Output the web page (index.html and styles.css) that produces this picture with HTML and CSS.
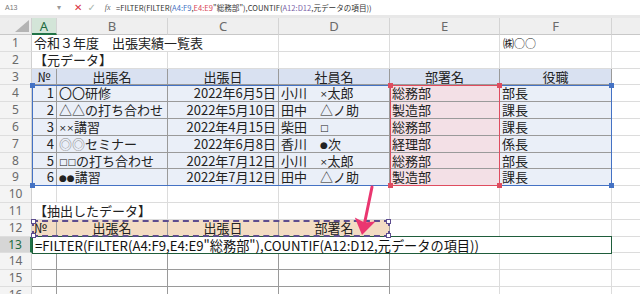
FILE: index.html
```html
<!DOCTYPE html>
<html lang="ja">

<head>
    <meta charset="UTF-8">
    <meta name="viewport" content="width=device-width, initial-scale=1.0">
    <title>出張実績一覧表</title>
    <link rel="stylesheet" href="styles.css">
</head>

<body>
    <div class="formula-bar">
        <div class="name-box"><span>A13</span><span class="caret">▾</span></div>
        <div class="bar-buttons">
            <span class="btn-cancel">✕</span>
            <span class="btn-enter">✓</span>
            <span class="btn-fx">fx</span>
        </div>
        <div class="formula">=FILTER(FILTER(<span class="ref-blue">A4:F9</span>,<span class="ref-red">E4:E9</span>"総務部"),COUNTIF(<span class="ref-purple">A12:D12</span>,元データの項目))</div>
    </div>

    <div class="sheet-wrap">
        <div class="grid sheet">
            <div class="corner"></div>
            <div class="ch sel">A</div><div class="ch">B</div><div class="ch">C</div><div class="ch">D</div><div class="ch">E</div><div class="ch">F</div><div class="ch"></div>

            <div class="rh">1</div><div class="c span3">令和３年度　出張実績一覧表</div><div class="c"></div><div class="c"></div><div class="c corp">㈱○○</div><div class="c"></div>
            <div class="rh">2</div><div class="c span2">【元データ】</div><div class="c"></div><div class="c"></div><div class="c"></div><div class="c"></div><div class="c"></div>
            <div class="rh">3</div><div class="c t th ctr">№</div><div class="c t th ctr">出張名</div><div class="c t th ctr">出張日</div><div class="c t th ctr">社員名</div><div class="c t th ctr">部署名</div><div class="c t th ctr">役職</div><div class="c"></div>

            <div class="rh">4</div><div class="c t d r">1</div><div class="c t d">〇〇研修</div><div class="c t d r">2022年6月5日</div><div class="c t d">小川　<span class="sym">×</span>太郎</div><div class="c t dept">総務部</div><div class="c t d">部長</div><div class="c"></div>
            <div class="rh">5</div><div class="c t d r">2</div><div class="c t d">△△の打ち合わせ</div><div class="c t d r">2022年5月10日</div><div class="c t d">田中　△ノ助</div><div class="c t dept">製造部</div><div class="c t d">課長</div><div class="c"></div>
            <div class="rh">6</div><div class="c t d r">3</div><div class="c t d"><span class="sym">××</span>講習</div><div class="c t d r">2022年4月15日</div><div class="c t d">柴田　<span class="sym">□</span></div><div class="c t dept">総務部</div><div class="c t d">課長</div><div class="c"></div>
            <div class="rh">7</div><div class="c t d r">4</div><div class="c t d"><span class="gray">◎◎</span>セミナー</div><div class="c t d r">2022年6月8日</div><div class="c t d">香川　<span class="sym">●</span>次</div><div class="c t dept">経理部</div><div class="c t d">係長</div><div class="c"></div>
            <div class="rh">8</div><div class="c t d r">5</div><div class="c t d"><span class="sym">□□</span>の打ち合わせ</div><div class="c t d r">2022年7月12日</div><div class="c t d">小川　<span class="sym">×</span>太郎</div><div class="c t dept">総務部</div><div class="c t d">部長</div><div class="c"></div>
            <div class="rh">9</div><div class="c t d r">6</div><div class="c t d"><span class="sym">●●</span>講習</div><div class="c t d r">2022年7月12日</div><div class="c t d">田中　△ノ助</div><div class="c t dept">製造部</div><div class="c t d">課長</div><div class="c"></div>

            <div class="rh">10</div><div class="c"></div><div class="c"></div><div class="c"></div><div class="c"></div><div class="c"></div><div class="c"></div><div class="c"></div>
            <div class="rh">11</div><div class="c span2">【抽出したデータ】</div><div class="c"></div><div class="c"></div><div class="c"></div><div class="c"></div><div class="c"></div>
            <div class="rh">12</div><div class="c t hx">№</div><div class="c t hx ctr">出張名</div><div class="c t hx ctr">出張日</div><div class="c t hx ctr">部署名</div><div class="c"></div><div class="c"></div><div class="c"></div>
            <div class="rh sel">13</div><div class="c t"></div><div class="c t"></div><div class="c t"></div><div class="c t"></div><div class="c"></div><div class="c"></div><div class="c"></div>
            <div class="rh">14</div><div class="c t"></div><div class="c t"></div><div class="c t"></div><div class="c t"></div><div class="c"></div><div class="c"></div><div class="c"></div>
            <div class="rh">15</div><div class="c t"></div><div class="c t"></div><div class="c t"></div><div class="c t"></div><div class="c"></div><div class="c"></div><div class="c"></div>
            <div class="rh">16</div><div class="c t"></div><div class="c t"></div><div class="c t"></div><div class="c t"></div><div class="c"></div><div class="c"></div><div class="c"></div>
        </div>

        <!-- reference highlights and the in-cell editor, on the same grid -->
        <div class="grid overlay">
            <div class="ref range-blue"><i class="hd tl"></i><i class="hd tr"></i><i class="hd bl"></i><i class="hd br"></i></div>
            <div class="ref range-red"><i class="hd tl"></i><i class="hd tr"></i><i class="hd bl"></i><i class="hd br"></i></div>
            <div class="ref range-purple"><i class="hd tl"></i><i class="hd tr"></i><i class="hd bl"></i><i class="hd br"></i></div>
            <div class="editor">=FILTER(FILTER(A4:F9,E4:E9"総務部"),COUNTIF(A12:D12,元データの項目))</div>
        </div>

        <svg class="arrow" width="30" height="55" viewBox="0 0 30 55">
            <line x1="22" y1="2" x2="14.6" y2="38" stroke="#ea3670" stroke-width="3" stroke-linecap="round" />
            <polygon points="12,50 4.8,32.5 14.5,37.5 25.4,36.5" fill="#ea3670" />
        </svg>
    </div>
</body>

</html>
```

FILE: styles.css
```css
* {
    box-sizing: border-box;
}

html,
body {
    margin: 0;
}

body {
    width: 640px;
    height: 294px;
    overflow: hidden;
    background: #fff;
    font-family: "Noto Sans CJK JP", sans-serif;
    color: #222;
}

/* formula bar */
.formula-bar {
    display: flex;
    align-items: center;
    height: 18px;
    border-bottom: 3px solid #e8e8e8;
    white-space: nowrap;
}

.name-box {
    width: 64px;
    display: flex;
    justify-content: space-between;
    align-items: center;
    padding: 0 3px 0 5px;
    font: 7px "Liberation Sans", sans-serif;
    color: #777;
}

.name-box .caret {
    font-size: 8px;
    color: #999;
}

.bar-buttons {
    width: 52px;
    display: flex;
    align-items: center;
    gap: 5px;
    padding-left: 10px;
    font: 10px "DejaVu Sans", sans-serif;
}

.btn-cancel {
    color: #d9343f;
}

.btn-enter {
    color: #a8b4ac;
}

.btn-fx {
    margin-left: 4px;
    font: italic 8px "Liberation Serif", serif;
    color: #666;
}

.formula {
    font-size: 7.6px;
    color: #333;
}

.ref-blue {
    color: #4472c4;
}

.ref-red {
    color: #d9475a;
}

.ref-purple {
    color: #7a5fa8;
}

/* sheet */
.sheet-wrap {
    position: relative;
}

.grid {
    display: grid;
    grid-template-columns: 32px 25px 111px 111px 111px 110px 112px 111px;
    grid-template-rows: 17px repeat(16, 16.8px);
}

.corner {
    background: #ededed;
    border-right: 1px solid #d0d0d0;
    border-bottom: 1px solid #c8c8c8;
    position: relative;
}

.corner::after {
    content: "";
    position: absolute;
    right: 2px;
    bottom: 2px;
    width: 14px;
    height: 12px;
    background: #b4b4b4;
    clip-path: polygon(100% 0, 100% 100%, 0 100%);
}

.ch {
    background: #efefef;
    border-right: 1px solid #d4d4d4;
    border-bottom: 1px solid #c8c8c8;
    text-align: center;
    font: 13px "Noto Sans", sans-serif;
    line-height: 16px;
    color: #6a6a6a;
}

.ch.sel {
    background: #d3e5d8;
    color: #1e6b40;
    border-bottom: 2px solid #217346;
}

.rh {
    background: #f4f4f4;
    border-right: 1px solid #d0d0d0;
    border-bottom: 1px solid #dedede;
    text-align: center;
    font: 12px "Noto Sans", sans-serif;
    line-height: 16px;
    color: #6a6a6a;
}

.rh.sel {
    background: #d6d6d6;
    color: #1e6b40;
    border-right: 2px solid #217346;
}

.c {
    border-right: 1px solid #dcdcdc;
    border-bottom: 1px solid #dcdcdc;
    padding: 0 2px;
    font-size: 13px;
    line-height: 16px;
    white-space: nowrap;
}

.span2 {
    grid-column: span 2;
}

.span3 {
    grid-column: span 3;
}

.corp {
    font-size: 11px;
    padding-left: 3px;
}

.t {
    border-right-color: #9a9a9a;
    border-bottom-color: #9a9a9a;
}

.th {
    background: #d9e1f1;
}

.d {
    background: #eaeff8;
}

.dept {
    background: #f3e0e6;
}

.hx {
    background: #f3dcc3;
}

.r {
    text-align: right;
}

.ctr {
    text-align: center;
}

.sym {
    font: 9px "DejaVu Sans", sans-serif;
    vertical-align: 1px;
}

.gray {
    color: #8a8a8a;
}

/* overlay: highlighted references and the editing box */
.overlay {
    position: absolute;
    inset: 0;
    pointer-events: none;
}

.ref {
    position: relative;
}

.range-blue {
    grid-column: 2 / 8;
    grid-row: 5 / 11;
    border: 1px solid #4472c4;
}

.range-red {
    grid-column: 6 / 7;
    grid-row: 5 / 11;
    border: 1px solid #df4c5f;
}

.range-purple {
    grid-column: 2 / 6;
    grid-row: 13 / 14;
    border: 2px dashed #5d4d8e;
}

.hd {
    position: absolute;
    width: 5px;
    height: 5px;
    background: #4472c4;
}

.range-red .hd {
    background: #df4c5f;
}

.range-purple .hd {
    background: #fff;
    border: 1px solid #5d4d8e;
}

.tl {
    left: -3px;
    top: -3px;
}

.tr {
    right: -3px;
    top: -3px;
}

.bl {
    left: -3px;
    bottom: -3px;
}

.br {
    right: -3px;
    bottom: -3px;
}

.editor {
    grid-column: 2 / 8;
    grid-row: 14 / 15;
    margin: -1px 0;
    background: #fff;
    border: 1px solid #1f5d3b;
    padding: 0 2px;
    font-size: 13.2px;
    line-height: 17px;
    white-space: nowrap;
    color: #111;
}

.arrow {
    position: absolute;
    left: 350px;
    top: 167px;
}
```
